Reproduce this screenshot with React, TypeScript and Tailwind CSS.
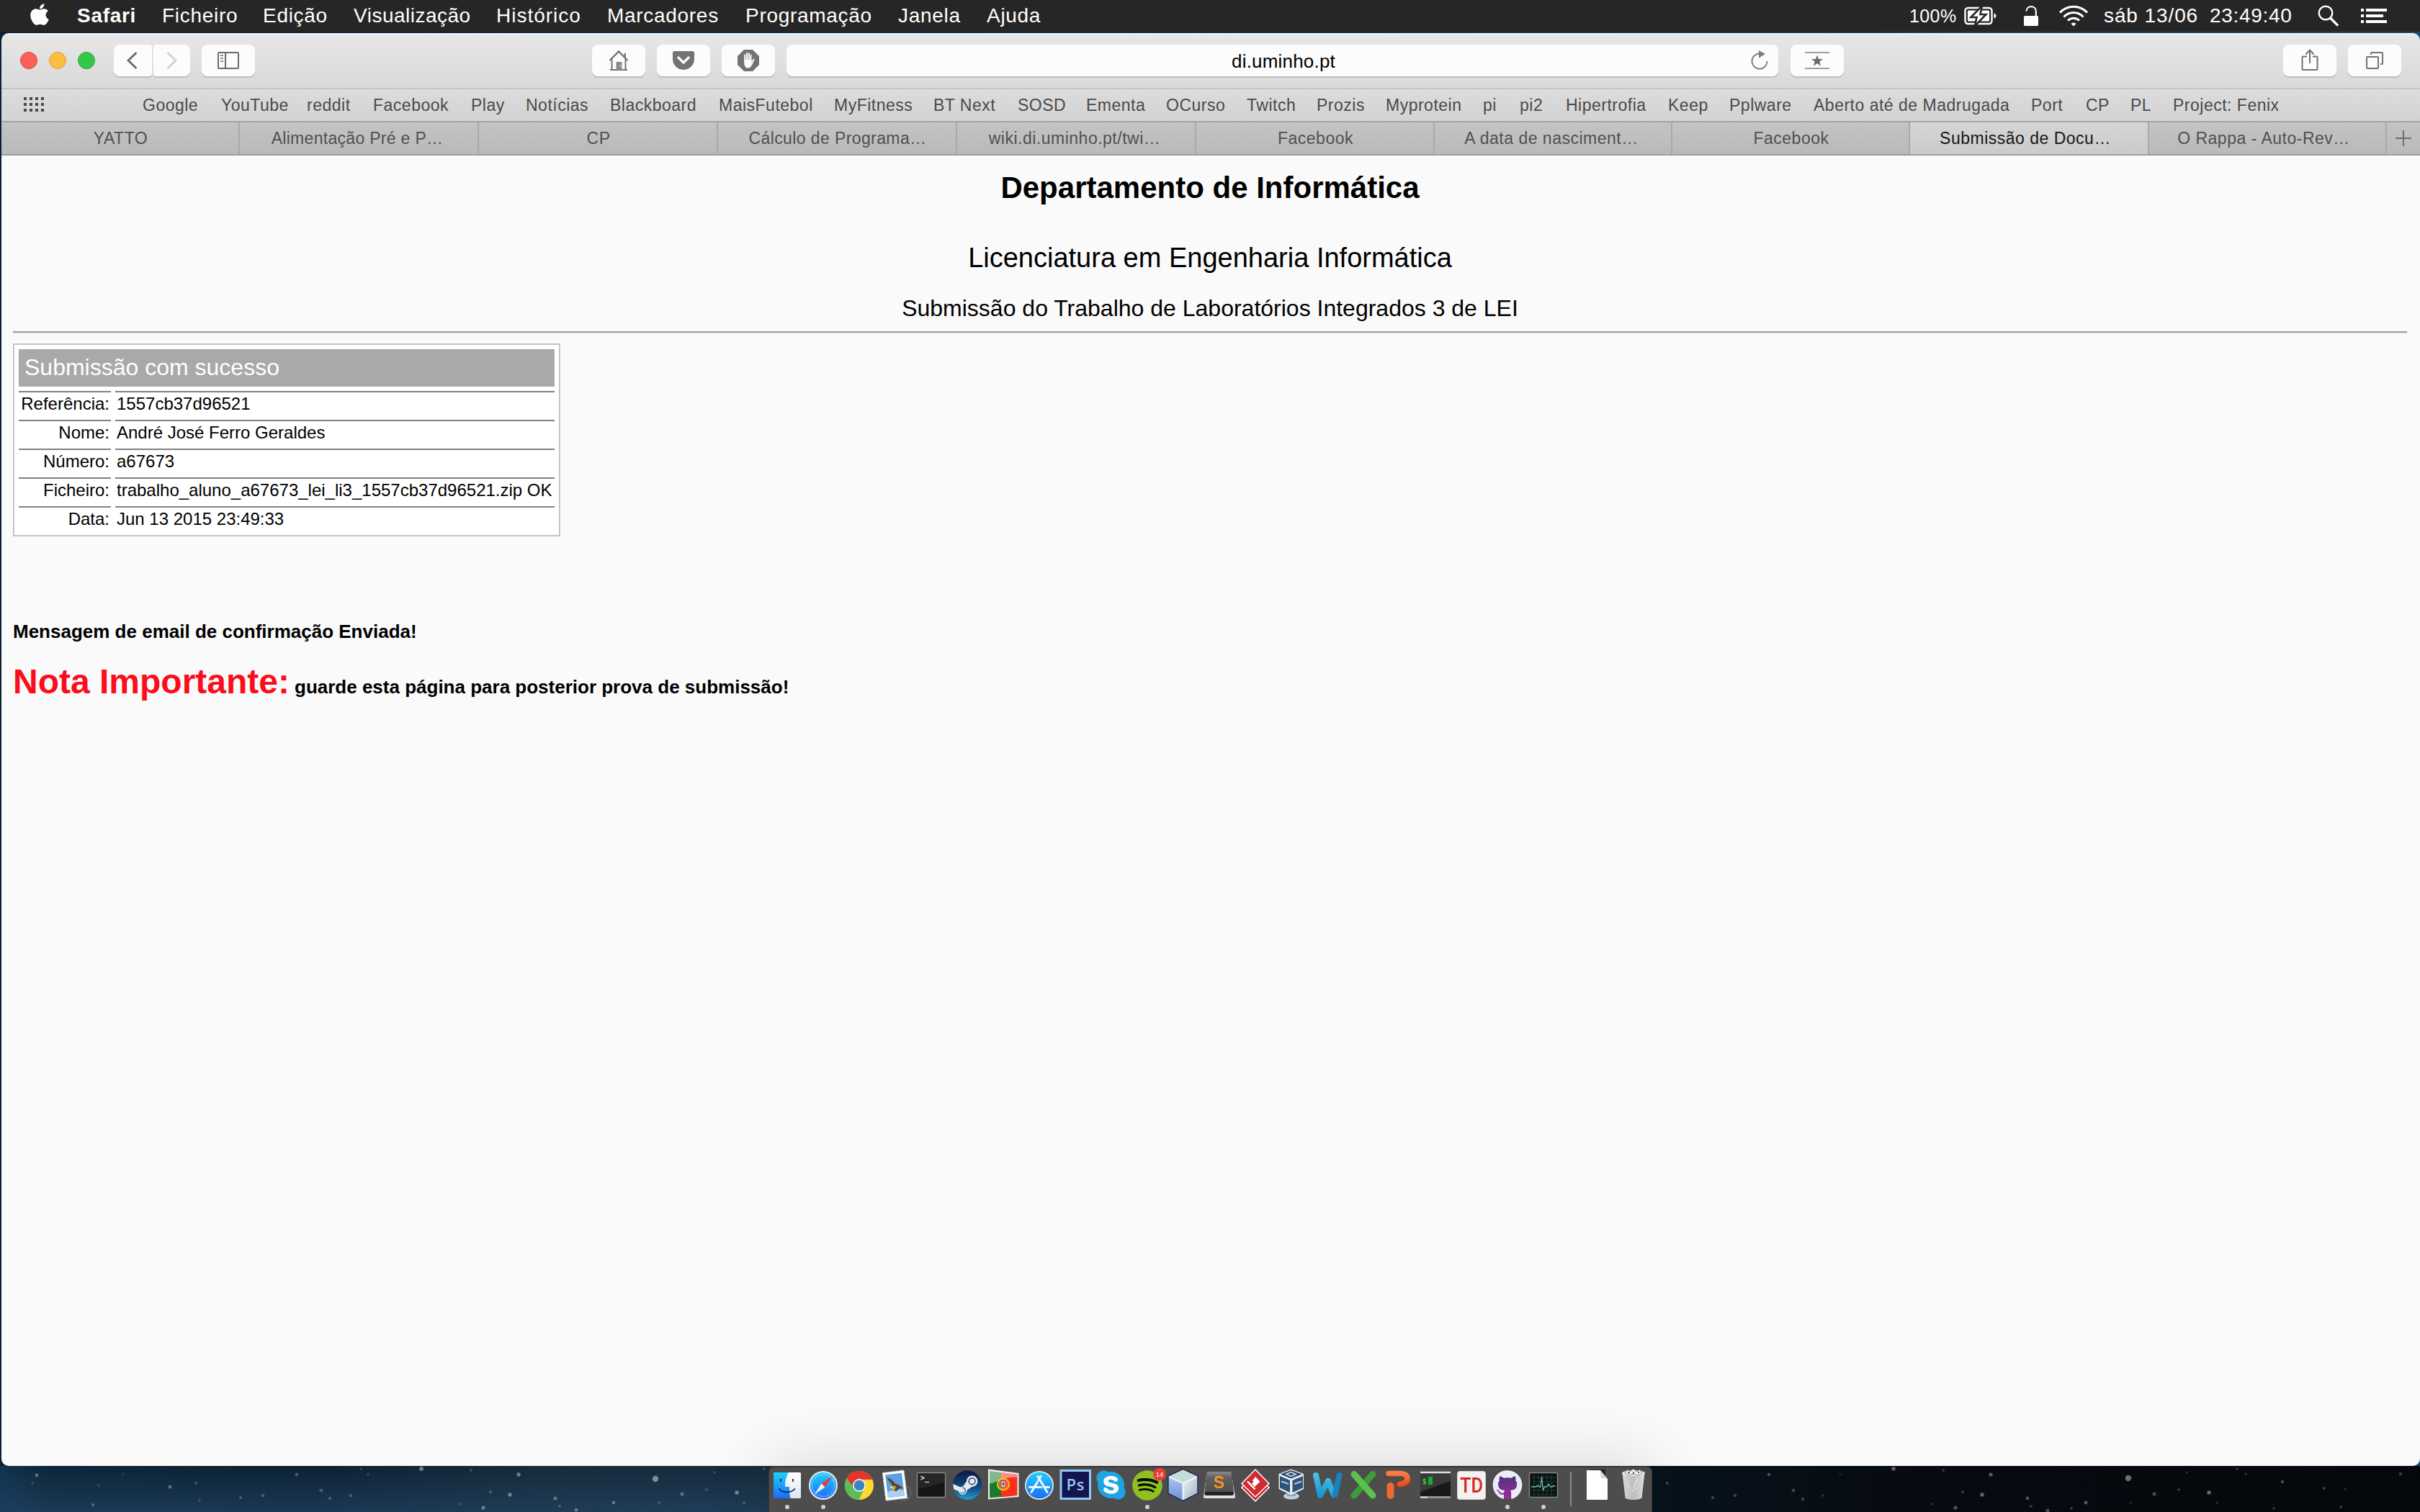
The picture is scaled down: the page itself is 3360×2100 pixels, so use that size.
import React from "react";
import { FaApple, FaSkype, FaSpotify, FaGithub, FaSteam, FaHandPaper } from "react-icons/fa";

const menus = [
  { label: "Safari", w: "w-[118px] font-bold" },
  { label: "Ficheiro", w: "w-[140px]" },
  { label: "Edição", w: "w-[126px]" },
  { label: "Visualização", w: "w-[198px] tracking-[0.5px]" },
  { label: "Histórico", w: "w-[154px] tracking-[1px]" },
  { label: "Marcadores", w: "w-[192px]" },
  { label: "Programação", w: "w-[212px]" },
  { label: "Janela", w: "w-[123px]" },
  { label: "Ajuda", w: "w-[90px]" },
];

const bookmarks = [
  { label: "Google", w: "w-[109px]" },
  { label: "YouTube", w: "w-[119px]" },
  { label: "reddit", w: "w-[92px]" },
  { label: "Facebook", w: "w-[136px]" },
  { label: "Play", w: "w-[76px]" },
  { label: "Notícias", w: "w-[117px]" },
  { label: "Blackboard", w: "w-[151px]" },
  { label: "MaisFutebol", w: "w-[160px]" },
  { label: "MyFitness", w: "w-[138px]" },
  { label: "BT Next", w: "w-[117px]" },
  { label: "SOSD", w: "w-[95px]" },
  { label: "Ementa", w: "w-[111px]" },
  { label: "OCurso", w: "w-[112px]" },
  { label: "Twitch", w: "w-[97px]" },
  { label: "Prozis", w: "w-[96px]" },
  { label: "Myprotein", w: "w-[135px]" },
  { label: "pi", w: "w-[51px]" },
  { label: "pi2", w: "w-[64px]" },
  { label: "Hipertrofia", w: "w-[142px]" },
  { label: "Keep", w: "w-[85px]" },
  { label: "Pplware", w: "w-[117px]" },
  { label: "Aberto até de Madrugada", w: "w-[302px]" },
  { label: "Port", w: "w-[76px]" },
  { label: "CP", w: "w-[62px]" },
  { label: "PL", w: "w-[59px]" },
  { label: "Project: Fenix", w: "w-[170px]" },
];

const tabs = [
  { label: "YATTO", c: "w-[331px] pl-0.5" },
  { label: "Alimentação Pré e P…", c: "w-[332px] pr-1 tracking-[0.3px]" },
  { label: "CP", c: "w-[332px] pl-0.5" },
  { label: "Cálculo de Programa…", c: "w-[332px] pl-0.5 tracking-[0.4px]" },
  { label: "wiki.di.uminho.pt/twi…", c: "w-[332px] pr-1" },
  { label: "Facebook", c: "w-[331px] pl-0.5" },
  { label: "A data de nasciment…", c: "w-[330px] pr-1" },
  { label: "Facebook", c: "w-[330px] pl-0.5" },
  { label: "Submissão de Docu…", c: "w-[332px] pr-2.5", active: true },
  { label: "O Rappa - Auto-Rev…", c: "w-[330px] pr-2.5" },
];

const rows = [
  ["Referência:", "1557cb37d96521"],
  ["Nome:", "André José Ferro Geraldes"],
  ["Número:", "a67673"],
  ["Ficheiro:", "trabalho_aluno_a67673_lei_li3_1557cb37d96521.zip OK"],
  ["Data:", "Jun 13 2015 23:49:33"],
];

/* x, y, radius, opacity */
const stars: number[][] = [
  [51, 13, 2.4, 0.6], [45, 24, 1.6, 0.35], [129, 54, 2.2, 0.45], [137, 27, 2.5, 0.18], [171, 12, 1.8, 0.2],
  [236, 29, 2.6, 0.55], [272, 24, 2, 0.4], [277, 48, 1.8, 0.3], [334, 44, 2.1, 0.4], [365, 41, 2.3, 0.4],
  [412, 12, 2.4, 0.45], [446, 34, 2.6, 0.4], [458, 45, 2.3, 0.4], [487, 41, 2.2, 0.4], [501, 4, 1.6, 0.35],
  [511, 12, 1.7, 0.3], [585, 4, 3, 0.75], [654, 6, 2, 0.35], [671, 58, 2.6, 0.65], [720, 12, 2.7, 0.7],
  [681, 36, 2, 0.45], [708, 40, 2.7, 0.7], [639, 53, 1.8, 0.3], [771, 45, 2.5, 0.6], [777, 56, 2, 0.4],
  [800, 61, 2.5, 0.6], [852, 51, 2.4, 0.6], [910, 18, 4.2, 0.85], [915, 51, 2, 0.35], [947, 39, 2.6, 0.55],
  [981, 33, 1.8, 0.4], [1023, 37, 2.8, 0.75], [1033, 51, 2, 0.35], [992, 9, 1.8, 0.3], [1061, 4, 1.8, 0.4],
  [2315, 24, 2, 0.4], [2378, 44, 2.2, 0.4], [2409, 41, 2.2, 0.4], [2456, 12, 2.2, 0.5], [2490, 34, 2.5, 0.4],
  [2503, 46, 2.2, 0.4], [2531, 41, 2, 0.25], [2555, 12, 1.8, 0.2], [2629, 4, 2.8, 0.65], [2698, 6, 1.9, 0.35],
  [2715, 58, 2.6, 0.55], [2725, 36, 2, 0.4], [2752, 40, 2.8, 0.65], [2764, 12, 2.6, 0.6], [2683, 53, 1.8, 0.3],
  [2815, 45, 2.4, 0.55], [2820, 56, 2, 0.35], [2843, 62, 2.5, 0.5], [2876, 59, 1.9, 0.4], [2896, 51, 2.4, 0.6],
  [2955, 17, 4.2, 0.75], [2958, 51, 1.8, 0.25], [2991, 39, 2.5, 0.5], [3025, 33, 1.8, 0.4], [3067, 37, 2.8, 0.7],
  [3036, 9, 1.8, 0.25], [3078, 51, 1.8, 0.3], [3106, 4, 1.8, 0.35], [3118, 11, 1.8, 0.3], [3157, 59, 1.8, 0.35],
  [3169, 22, 2.2, 0.5], [3227, 31, 2, 0.4], [3250, 57, 2, 0.35], [3256, 32, 2, 0.25], [3333, 11, 2.4, 0.35],
];

const btn =
  "flex h-11 items-center justify-center rounded-[8px] bg-[#fcfcfc] shadow-[0_2px_0_#bebebe]";

function MenuBar() {
  return (
    <header className="flex h-11 shrink-0 items-center bg-[#262626] text-[28px] leading-[44px] tracking-[0.7px] text-white">
      <div className="flex w-[107px] shrink-0 items-center pl-[42px]">
        <FaApple className="h-[34px] w-[26px] -mt-[4px]" preserveAspectRatio="none" />
      </div>
      {menus.map((m) => (
        <span key={m.label} className={"shrink-0 whitespace-nowrap " + m.w}>{m.label}</span>
      ))}
      <div className="ml-auto flex items-center pr-[46px]">
        <span className="w-[76px] whitespace-nowrap text-[25px] tracking-[0.4px]">100%</span>
        <svg className="h-[26px] w-[46px]" viewBox="0 0 46 26">
          <rect x="1.5" y="2" width="37" height="22" rx="4" fill="none" stroke="#fff" strokeWidth="2.4" />
          <path d="M41.5 9.5c4 1 4 6 0 7z" fill="#fff" />
          <rect x="5" y="5.500" width="30" height="15" rx="1" fill="#fff" />
          <path d="M25 -1 9.500 15h8L15 27 30.500 11h-8z" fill="#fff" stroke="#262626" strokeWidth="2.6" />
        </svg>
        <svg className="ml-[36px] h-[30px] w-[22px]" viewBox="0 0 22 30">
          <rect x="1" y="15" width="20" height="14" rx="1.500" fill="#fff" />
          <path d="M4.500 8.500C4.500 0 17.800 0 17.800 8.500V16" fill="none" stroke="#fff" strokeWidth="2.2" />
        </svg>
        <svg className="ml-[27px] h-[30px] w-[42px]" viewBox="0 0 42 30" fill="none" stroke="#fff" strokeWidth="3">
          <path d="M2 10.500C12.500-.5 29.500-.5 40 10.500" />
          <path d="M7.500 16.500C15 8.500 27 8.500 34.500 16.500" />
          <path d="M13 21.500c4.500-4.500 11.500-4.500 16 0" />
          <path d="M17.500 26c2-2 5-2 7 0L21 29.500z" fill="#fff" stroke="none" />
        </svg>
        <span className="ml-[21px] w-[147px] whitespace-nowrap tracking-[0.9px]">sáb 13/06</span>
        <span className="w-[150px] whitespace-nowrap">23:49:40</span>
        <svg className="h-[30px] w-[29px]" viewBox="0 0 29 30" fill="none" stroke="#fff">
          <circle cx="11" cy="11" r="9.300" strokeWidth="2.4" />
          <path d="M17.500 18 28 28.500" strokeWidth="3.2" />
        </svg>
        <svg className="ml-[31px] h-[22px] w-[36px]" viewBox="0 0 36 22" stroke="#fff" strokeWidth="3.8">
          <path d="M0 3h4M7 3h29M0 11h4M7 11h24M0 19h4M7 19h29" />
        </svg>
      </div>
    </header>
  );
}

function Toolbar() {
  return (
    <div className="flex h-[78px] shrink-0 items-start border-t-2 border-b-2 border-t-[#f3f3f3] border-b-[#c4c4c4] bg-linear-to-b from-[#e7e7e7] to-[#d9d9d9] pt-[14px]">
      <div className="flex h-11 w-[156px] items-center gap-4 pl-[26px]">
        <span className="size-6 rounded-full border border-[#e0453f] bg-[#fc605b]" />
        <span className="size-6 rounded-full border border-[#dea133] bg-[#fdbd41]" />
        <span className="size-6 rounded-full border border-[#27a838] bg-[#34c84a]" />
      </div>
      <div className={btn + " w-[53px] rounded-r-[4px] pr-[3px]"}>
        <svg className="h-6 w-4" viewBox="0 0 16 24" fill="none" stroke="#6b6b6b" strokeWidth="2.8"><path d="M14.500 1 3 12l11.500 11" /></svg>
      </div>
      <div className={btn + " ml-[2px] w-[51px] rounded-l-[4px]"}>
        <svg className="h-6 w-4" viewBox="0 0 16 24" fill="none" stroke="#d2d2d2" strokeWidth="2.8"><path d="M1.500 1 13 12 1.500 23" /></svg>
      </div>
      <div className={btn + " ml-4 w-[74px]"}>
        <svg className="h-6 w-[30px]" viewBox="0 0 30 24" fill="none" stroke="#6b6b6b" strokeWidth="2">
          <rect x="1" y="1" width="28" height="22" rx="1.500" />
          <path d="M11 1v22" />
          <path d="M4 5h4M4 9h4M4 13h4" stroke="#8f8f8f" />
        </svg>
      </div>
      <div className={btn + " ml-[468px] w-[74px]"}>
        <svg className="h-[28px] w-[28px]" viewBox="0 0 28 28" fill="none" stroke="#737373" strokeWidth="2">
          <path d="M1.500 14 14 1.500 26.500 14" strokeWidth="2.4" />
          <path d="M4.500 12v14M23.500 12v14M2 27h24" />
          <path d="M21.500 4v5h2.500V4z" fill="#737373" stroke="none" />
          <path d="M10.500 16h8v11h-8z" fill="#8a8a8a" stroke="none" />
          <circle cx="16.500" cy="21.500" r="0.900" fill="#fff" stroke="none" />
        </svg>
      </div>
      <div className={btn + " ml-4 w-[74px]"}>
        <svg className="h-[26px] w-[30px]" viewBox="0 0 30 26">
          <path d="M2.500 0h25A2.500 2.500 0 0 1 30 2.500V11a15 15 0 0 1-30 0V2.500A2.500 2.500 0 0 1 2.500 0z" fill="#737373" />
          <path d="M8 9l7 7 7-7" fill="none" stroke="#fcfcfc" strokeWidth="3.4" strokeLinecap="round" strokeLinejoin="round" />
        </svg>
      </div>
      <div className={btn + " ml-4 w-[74px]"}>
        <svg className="h-[30px] w-[30px]" viewBox="0 0 30 30">
          <path d="M9 0h12l9 9v12l-9 9H9l-9-9V9z" fill="#737373" />
          <g fill="none" stroke="#fcfcfc" strokeWidth="2.1" strokeLinecap="round">
            <path d="M10.200 16V7.500M13 15V5M15.800 15V5.200M18.500 16V7.500M19.500 20l3-6.500" />
          </g>
          <path d="M9.200 14h10.300v4l1.500-1.500c0 4-2.500 9-6.500 9s-5.300-4-5.300-8z" fill="#fcfcfc" />
        </svg>
      </div>
      <div className="ml-4 flex h-11 w-[1377px] items-center rounded-[8px] bg-[#fcfcfc] pr-[14px] pl-[618px] shadow-[0_2px_0_#bebebe]">
        <span className="pt-[2px] text-[26px] leading-[42px] tracking-[0.2px] text-black">di.uminho.pt</span>
        <svg className="ml-auto h-[28px] w-[24px]" viewBox="0 0 24 28">
          <path d="M12 4.500A10.500 10.500 0 1 0 22.500 15" fill="none" stroke="#858585" strokeWidth="2" />
          <path d="M11 0v10.500L20 5z" fill="#7c7c7c" />
        </svg>
      </div>
      <div className={btn + " ml-[17px] w-[74px]"}>
        <svg className="h-6 w-[34px]" viewBox="0 0 34 24">
          <path d="M0 1h34M0 23h34" stroke="#a0a0a0" strokeWidth="2" />
          <path d="M17 4.500l2 5.500h6l-4.700 3.600 1.800 6L17 16l-5.100 3.600 1.800-6L9 10h6z" fill="#6b6b6b" />
        </svg>
      </div>
      <div className={btn + " ml-[610px] w-[74px]"}>
        <svg className="h-[30px] w-[24px] -mt-[2px]" viewBox="0 0 24 30" fill="none" stroke="#737373" strokeWidth="2">
          <path d="M8 10.500H2.500a1 1 0 0 0-1 1V28a1 1 0 0 0 1 1h19a1 1 0 0 0 1-1V11.500a1 1 0 0 0-1-1H16M12 20V2M6.500 7.500 12 1.500l5.500 6" />
        </svg>
      </div>
      <div className={btn + " ml-4 w-[74px]"}>
        <svg className="h-6 w-6" viewBox="0 0 24 24" fill="none" stroke="#737373" strokeWidth="2">
          <rect x="1" y="7" width="16" height="16" rx="1" />
          <path d="M7 4V2a1 1 0 0 1 1-1h14a1 1 0 0 1 1 1v14a1 1 0 0 1-1 1h-2" />
        </svg>
      </div>
    </div>
  );
}

function BookmarksBar() {
  return (
    <nav className="flex h-[46px] shrink-0 border-b-2 border-[#a4a4a4] bg-linear-to-b from-[#dcdcdc] to-[#d3d3d3] text-[23px] leading-[44px] tracking-[0.5px] text-[#4a4a4a]">
      <div className="w-[196px] pt-[11px] pl-[31px]">
        <svg className="h-5 w-7" viewBox="0 0 28 20" stroke="#4a4a4a" strokeWidth="4" strokeDasharray="4 4">
          <path d="M0 2h28M0 10h28M0 18h28" />
        </svg>
      </div>
      {bookmarks.map((b) => (
        <span key={b.label} className={"shrink-0 whitespace-nowrap " + b.w}>{b.label}</span>
      ))}
    </nav>
  );
}

function TabBar() {
  return (
    <div className="flex h-[46px] shrink-0 border-b-2 border-[#9c9c9c] bg-linear-to-b from-[#c4c4c4] to-[#b9b9b9] text-[23px] leading-[44px] tracking-[0.5px] text-[#505050]">
      {tabs.map((t, i) => (
        <div
          key={i}
          className={
            "flex shrink-0 justify-center whitespace-nowrap border-r-2 border-[#a9a9a9] " +
            t.c +
            (t.active ? " bg-linear-to-b from-[#d5d5d5] to-[#cbcbcb] text-[#161616]" : "")
          }
        >
          {t.label}
        </div>
      ))}
      <div className="flex flex-1 items-center justify-center">
        <svg className="h-[22px] w-[22px]" viewBox="0 0 22 22" stroke="#6e6e6e" strokeWidth="2"><path d="M0 11h22M11 0v22" /></svg>
      </div>
    </div>
  );
}

function Page() {
  return (
    <main className="flex flex-1 flex-col bg-[#fafafa] pl-4 pr-[18px] text-black">
      <h1 className="mt-[22px] text-center text-[42px] leading-[46px] font-bold">Departamento de Informática</h1>
      <h2 className="mt-[52px] text-center text-[38px] leading-[44px]">Licenciatura em Engenharia Informática</h2>
      <h3 className="mt-[30px] text-center text-[32px] leading-[36px]">Submissão do Trabalho de Laboratórios Integrados 3 de LEI</h3>
      <div className="mt-[14px] h-1 border-t-2 border-b-2 border-t-[#9a9a9a] border-b-[#eeeeee]" />
      <section className="mt-[13px] flex h-[268px] w-[760px] flex-col border-2 border-[#c4c4c4] bg-white p-[6px]">
        <div className="h-[52px] bg-[#a9a9a9] pl-2 text-[32px] leading-[50px] text-white">Submissão com sucesso</div>
        <div className="mt-[6px] flex flex-col gap-[6px] text-[24px]">
          {rows.map(([k, v]) => (
            <div key={k} className="flex h-[34px] gap-[6px] leading-[31px] whitespace-nowrap">
              <div className="w-[128px] border-t-2 border-[#808080] pr-[2px] text-right">{k}</div>
              <div className="flex-1 border-t-2 border-[#808080] pl-[2px]">{v}</div>
            </div>
          ))}
        </div>
      </section>
      <p className="mt-[117px] text-[26px] leading-[30px] font-bold">Mensagem de email de confirmação Enviada!</p>
      <p className="mt-[27px] flex items-baseline gap-[7px] text-[26px] leading-[56px] font-bold">
        <span className="text-[48px] text-[#fc0d1b]">Nota Importante:</span>
        <span>guarde esta página para posterior prova de submissão!</span>
      </p>
    </main>
  );
}

function Cell({ children, running }: { children: React.ReactNode; running?: boolean }) {
  return (
    <div className="flex w-[50px] shrink-0 flex-col items-center">
      <svg className="h-[52px] w-[50px]" viewBox="0 0 50 52">{children}</svg>
      {running && <span className="size-[6px] rounded-full bg-[#cfcfcf]" />}
    </div>
  );
}

function Dock() {
  return (
    <div className="flex h-[70px] w-[1227px] rounded-t-[8px] border-x border-t-2 border-[#363636] bg-[#4d4d4d] shadow-[0_0_90px_rgba(0,0,0,0.16)]">
      <svg className="absolute size-0">
        <defs>
          <linearGradient id="blue" x1="0" y1="0" x2="0" y2="1"><stop stopColor="#1fd0fd" /><stop offset="1" stopColor="#1b6df5" /></linearGradient>
          <linearGradient id="white" x1="0" y1="0" x2="0" y2="1"><stop stopColor="#fff" /><stop offset="1" stopColor="#dbe5f2" /></linearGradient>
          <linearGradient id="steam" x1="0" y1="0" x2="0" y2="1"><stop offset=".1" stopColor="#0b1f4d" /><stop offset=".6" stopColor="#144a86" /><stop offset="1" stopColor="#1a9fd4" /></linearGradient>
          <linearGradient id="word" x1="0" y1="0" x2="0" y2="1"><stop stopColor="#49bfe8" /><stop offset="1" stopColor="#1795d0" /></linearGradient>
          <linearGradient id="purple" x1="0" y1="0" x2="0" y2="1"><stop stopColor="#40347f" /><stop offset="1" stopColor="#9c2d92" /></linearGradient>
          <linearGradient id="trash" x1="0" y1="0" x2="1" y2="0"><stop stopColor="#d9d9d9" /><stop offset=".5" stopColor="#bdbdbd" /><stop offset="1" stopColor="#e0e0e0" /></linearGradient>
          <linearGradient id="key" x1="0" y1="0" x2="0" y2="1"><stop stopColor="#8b8b8b" /><stop offset=".3" stopColor="#606060" /><stop offset="1" stopColor="#505050" /></linearGradient>
          <linearGradient id="cubeL" x1="0" y1="0" x2="0" y2="1"><stop stopColor="#a9c1f0" /><stop offset="1" stopColor="#7391da" /></linearGradient>
          <linearGradient id="cubeR" x1="0" y1="0" x2="1" y2="1"><stop stopColor="#e9f1f3" /><stop offset="1" stopColor="#9fb4c4" /></linearGradient>
          <linearGradient id="orange" x1="0" y1="0" x2="0" y2="1"><stop stopColor="#fb7a45" /><stop offset="1" stopColor="#e8501c" /></linearGradient>
        </defs>
      </svg>
      <Cell running>
        <rect x="6" y="7" width="38" height="36" rx="1.500" fill="url(#white)" />
        <path d="M27 7c-4 7-5 13-5 20h6c0 6 .3 11 1.500 16H7.500A1.500 1.500 0 0 1 6 41.500v-33A1.500 1.500 0 0 1 7.500 7z" fill="url(#blue)" />
        <path d="M16 16v4M33 16v4" stroke="#11293f" strokeWidth="1.800" />
        <path d="M13.500 29.500c5 6.500 17 6.500 22.500 0" stroke="#11293f" strokeWidth="1.800" fill="none" />
      </Cell>
      <Cell running>
        <circle cx="25" cy="25" r="20" fill="#ededed" />
        <circle cx="25" cy="25" r="18" fill="url(#blue)" />
        <circle cx="25" cy="25" r="15.500" fill="none" stroke="#bfe6ff" strokeWidth="2" strokeDasharray=".7 1.600" />
        <path d="M38 12 22.500 22.500l5 5z" fill="#f2353a" />
        <path d="M13 37.500 22.500 22.500l5 5z" fill="#f0f0f0" />
      </Cell>
      <Cell>
        <circle cx="25" cy="25" r="20" fill="#ffd72f" />
        <path d="M7.700 15a20 20 0 0 0 16.800 30L32.500 29 25 25z" fill="#5ebb5c" />
        <path d="M7.700 15A20 20 0 0 1 43.500 17H25l-8.500 10z" fill="#e5342b" />
        <circle cx="25" cy="25" r="9" fill="#f4f4f4" />
        <circle cx="25" cy="25" r="7.300" fill="#3b84bd" />
      </Cell>
      <Cell>
        <circle cx="37.500" cy="36" r="9.500" fill="none" stroke="#5b6472" strokeWidth="1.500" />
        <g transform="rotate(-7 25 25)">
          <rect x="10" y="6" width="29" height="38" fill="#fff" stroke="#fff" strokeWidth="2" strokeDasharray="1.800 1.200" />
          <rect x="13" y="9" width="23" height="32" fill="#5e9fe0" />
          <path d="M13 33c8-3 15-2 23 0v8H13z" fill="#a9d0f2" />
          <path d="M14.500 13c4 1 8 5 11 10 4 1 8 4 10 8-4-2-7-1-9 2-2 0-3 0-5-2 1-5-3-11-7-18z" fill="#5b432d" />
          <path d="M18 27c3-2 6-2 8 0l-3 5c-2 0-4-2-5-5z" fill="#d3a13c" />
          <path d="M17 26h4l-1 2.500z" fill="#fff" />
        </g>
      </Cell>
      <Cell>
        <rect x="5.500" y="7.500" width="39" height="34" rx="1.500" fill="#161616" stroke="#8a8d8e" strokeWidth="1.400" />
        <path d="M7 9h36v12L7 30z" fill="#262626" />
        <text x="10" y="18" fontFamily="DejaVu Sans Mono" fontWeight="700" fontSize="10" fill="#f0f0f0">&gt;_</text>
      </Cell>
      <Cell>
        <circle cx="25" cy="25" r="19.500" fill="#e9e9ec" />
        <FaSteam x="4" y="3.500" size={42} className="fill-[url(#steam)]" />
      </Cell>
      <Cell>
        <path d="M4 2.500 46.500 8v33L4 44.500z" fill="#f0f0f0" />
        <path d="M6 5 22 7v34L6 42.500z" fill="#1c7a2c" />
        <path d="M22 7 44.500 9.500V39L22 41.500z" fill="#f8301d" />
        <path d="M5 4 44.500 9v5C28 12 18 20 5 23z" fill="#fff" opacity=".45" />
        <circle cx="25" cy="23.500" r="8" fill="none" stroke="#f2c81b" strokeWidth="2" />
        <path d="M20 17h10v8a5 5 0 0 1-10 0z" fill="#e8362e" stroke="#f4d03a" strokeWidth=".8" />
        <path d="M22.500 19.500h5V25a2.500 2.500 0 0 1-5 0z" fill="#e8ecf7" />
        <path d="M25 20v6M23 23h4" stroke="#2a52a5" strokeWidth="1.300" />
      </Cell>
      <Cell>
        <circle cx="25" cy="25" r="20" fill="#e9e9e9" />
        <circle cx="25" cy="25" r="18.300" fill="url(#blue)" />
        <g stroke="#eef7ff" strokeWidth="3" strokeLinecap="round">
          <path d="M23 12.500 36 34.500M27 12.500 14 34.500" />
          <path d="M11.500 27.500H28M33.500 27.500h5" />
        </g>
        <path d="M22.500 18.500 29 28" stroke="#1b8df8" strokeWidth="0.800" />
      </Cell>
      <Cell>
        <rect x="3.500" y="3" width="43.500" height="42" fill="#90c8f8" />
        <rect x="6.500" y="6" width="37.500" height="36" fill="#13154f" />
        <text x="12.500" y="32" fontFamily="Open Sans" fontWeight="600" fontSize="22" textLength="25" fill="#8fc6f7">Ps</text>
      </Cell>
      <Cell>
        <circle cx="25" cy="25" r="15" fill="#fff" />
        <FaSkype x="1.500" y="1.500" size={46} color="#1fa4e3" />
      </Cell>
      <Cell running>
        <circle cx="25" cy="25" r="19" fill="#070b00" />
        <FaSpotify x="3.500" y="3.500" size={43} color="#8fbf22" />
        <circle cx="42" cy="9.500" r="8.800" fill="#f03a35" />
        <text x="42" y="13" textAnchor="middle" fontFamily="Liberation Sans" fontSize="9.500" fill="#fff">14</text>
      </Cell>
      <Cell>
        <path d="M24.500 2.500 45 12v24L24.500 46.500 4 36V12z" fill="#f3f6f8" stroke="#1e2c5c" strokeWidth="1.600" />
        <path d="M24.500 3.500 44 12.500 24.500 21 5 12.500z" fill="#c5ddd8" />
        <path d="M5 14.500 23.500 22.500V45L5 35.500z" fill="url(#cubeL)" />
        <path d="M44 14.500 25.500 22.500V45L44 35.500z" fill="url(#cubeR)" />
      </Cell>
      <Cell>
        <path d="M7.500 7.500h34l5.500 33c.2 1.500-.5 2.500-2 2.500H5c-1.500 0-2.200-1-2-2.500z" fill="#e3e0e0" />
        <path d="M9.500 6h30.500a2 2 0 0 1 2 2l3 28c0 2-1 3-2.500 3h-36C5 39 4 38 4.500 36L7.500 8a2 2 0 0 1 2-2z" fill="#232323" />
        <path d="M9.500 6h30.500a2 2 0 0 1 2 2l2.500 26H5L7.500 8a2 2 0 0 1 2-2z" fill="url(#key)" />
        <text x="24.500" y="28.500" textAnchor="middle" fontFamily="Liberation Sans" fontWeight="700" fontSize="23" fill="#fb9526">S</text>
      </Cell>
      <Cell>
        <path d="M25 8 44 28 25 47 6 28z" fill="#c9282e" stroke="#fff" strokeWidth="1.500" />
        <path d="M25 3 44 22.500 25 41 6 22.500z" fill="#cf2b31" stroke="#fff" strokeWidth="1.500" />
        <path d="M25 13 31.500 20 24 27l-4-4.500 2.500-2.500-1.500-1.500z" fill="#fff" />
        <path d="M14 19.500l10.500 11" stroke="#fff" strokeWidth="2.500" />
      </Cell>
      <Cell>
        <ellipse cx="25" cy="40" rx="11" ry="4.500" fill="#c3cfdf" />
        <path d="M19 32h12v8H19z" fill="#8fa3bd" />
        <path d="M24.500 2.500 42 9v21L24.500 38.500 7.500 30V9z" fill="#e8edf2" />
        <path d="M24.500 4 39.500 9.500 24.500 15.500 10 9.500z" fill="#1e3c60" />
        <path d="M9 12 23 18v17L9 28.500zM41 12 26.500 18v17L41 28.500z" fill="#2d5379" />
        <path d="M11 19.500 21 23M29 23l10-3.500M18 9.500l6.500-3 6.500 3-6.500 3z" stroke="#b9cadb" strokeWidth="2" fill="none" />
      </Cell>
      <Cell>
        <g fill="none" strokeLinecap="round" strokeLinejoin="round">
          <path d="M26 19 34 38" stroke="#35ace0" strokeWidth="8" />
          <path d="M41.500 11 35.500 38" stroke="#1a83bb" strokeWidth="8" />
          <path d="M9 11 15 39 26 19" stroke="url(#word)" strokeWidth="8" />
        </g>
      </Cell>
      <Cell>
        <g strokeLinecap="round" strokeWidth="9">
          <path d="M38 9.500 12 39" stroke="#3f9b3c" />
          <path d="M12 9.500 38 39" stroke="#5cc14f" />
        </g>
      </Cell>
      <Cell>
        <g fill="none" strokeLinecap="round" strokeLinejoin="round">
          <path d="M24 23.500c9 0 13-1 13-6" stroke="#b8360f" strokeWidth="7" />
          <path d="M10 8.500H26c14 0 13 13 0 15" stroke="url(#orange)" strokeWidth="7.500" />
          <path d="M12.500 26v13" stroke="#f4672f" strokeWidth="10" />
        </g>
      </Cell>
      <Cell>
        <rect x="4" y="6" width="42" height="36" fill="#191919" />
        <path d="M4 8h42v11L4 34z" fill="#3a3a3a" />
        <path d="M4 7h42M4 41.500h42" stroke="#dedede" strokeWidth="2.400" />
        <path d="M14 41.500h32" stroke="#8b8b8b" strokeWidth="2.400" />
        <text x="6.500" y="22.500" fontFamily="DejaVu Sans Mono" fontWeight="700" fontSize="11" fill="#2fd13a">$</text>
        <rect x="15" y="13" width="6" height="11" fill="#1fa82c" />
      </Cell>
      <Cell>
        <rect x="5.500" y="5.500" width="39" height="39" rx="3" fill="#f4f2f2" stroke="#d0d0d0" />
        <text x="9" y="35" fontFamily="Roboto" fontWeight="500" fontSize="29" textLength="32" lengthAdjust="spacingAndGlyphs" fill="#d9261c">TD</text>
      </Cell>
      <Cell running>
        <circle cx="25" cy="25" r="19" fill="url(#purple)" />
        <FaGithub x="4" y="3.500" size={42} color="#ecebf8" />
      </Cell>
      <Cell running>
        <rect x="5.500" y="7.500" width="39" height="34" rx="1.500" fill="#0a1211" stroke="#85898a" strokeWidth="1.400" />
        <path d="M9 14h33M9 20h33M9 26h33M9 32h33M9 38h33M12 10v29M18 10v29M24 10v29M30 10v29M36 10v29" stroke="#23463f" strokeWidth=".9" />
        <path d="M8 27h7l2-2 2 2h2l1.500-14L24.500 32l2-5h3l3-4 2 4h3l1.500-2 2 2" fill="none" stroke="#62b9a4" strokeWidth="1.300" />
      </Cell>
      <div className="mt-[6px] ml-[12px] h-[48px] w-[2px] bg-[#8a8a8a]" />
      <div className="ml-[11px] flex">
        <Cell>
          <path d="M15 3h21v8H15z" fill="#222" />
          <path d="M10 4h19l10 12v29H10z" fill="#fff" />
          <path d="M28 4l11 12-9-1z" fill="#d6d6d6" />
        </Cell>
        <Cell>
          <path d="M9.500 8h31L36.500 42c-.5 4-22.500 4-23 0z" fill="url(#trash)" />
          <ellipse cx="25" cy="8" rx="16" ry="4" fill="#e9e9e9" />
          <path d="M13 8l3-5 4 3 5-4 4 4 5-3 3 5-5 3-7-2-6 2z" fill="#fafafa" stroke="#555" strokeWidth=".7" />
          <path d="M17 7l3 1M31 6l2 2M25 7v2" stroke="#333" strokeWidth="1.500" />
          <path d="M24 6l2 2" stroke="#2a76c9" strokeWidth="1.500" />
          <path d="M16 20l4 10M30 16l-5 12M22 34l8-6" stroke="#dcdcdc" strokeWidth="2" />
        </Cell>
      </div>
    </div>
  );
}

export default function App() {
  return (
    <div className="relative flex h-[2100px] w-[3360px] flex-col overflow-hidden bg-linear-to-r from-[#0c2036] via-[#0c2e4b] to-[#1c486b] font-['Liberation_Sans',Arial,sans-serif]">
      <svg className="absolute top-[2036px] left-0 h-16 w-[3360px]" viewBox="0 0 3360 64">
        <defs>
          <linearGradient id="sky" x1="0" x2="1" y1="0" y2="0">
            <stop stopColor="#12324e" /><stop offset=".02" stopColor="#0d2538" /><stop offset=".13" stopColor="#0c2132" />
            <stop offset=".22" stopColor="#18293a" /><stop offset=".32" stopColor="#182a3c" /><stop offset=".68" stopColor="#07131d" />
            <stop offset=".8" stopColor="#070a10" /><stop offset="1" stopColor="#04070b" />
          </linearGradient>
          <linearGradient id="glow" x1="0" x2="0" y1="0" y2="1">
            <stop stopColor="#24486a" stopOpacity="0" /><stop offset="1" stopColor="#24486a" stopOpacity=".6" />
          </linearGradient>
        </defs>
        <rect width="3360" height="64" fill="url(#sky)" />
        <rect width="1100" height="64" fill="url(#glow)" />
        <g opacity=".7">
          {stars.map(([x, y, r, o], i) => (
            <ellipse key={i} cx={x} cy={y} rx={r} ry={r} fill="#c9cdd2" opacity={o} />
          ))}
        </g>
      </svg>
      <MenuBar />
      <div className="relative mt-[2px] ml-[2px] flex h-[1990px] w-[3358px] shrink-0 flex-col overflow-hidden rounded-[10px]">
        <Toolbar />
        <BookmarksBar />
        <TabBar />
        <Page />
      </div>
      <div className="relative ml-[1067px] shrink-0">
        <Dock />
      </div>
    </div>
  );
}
